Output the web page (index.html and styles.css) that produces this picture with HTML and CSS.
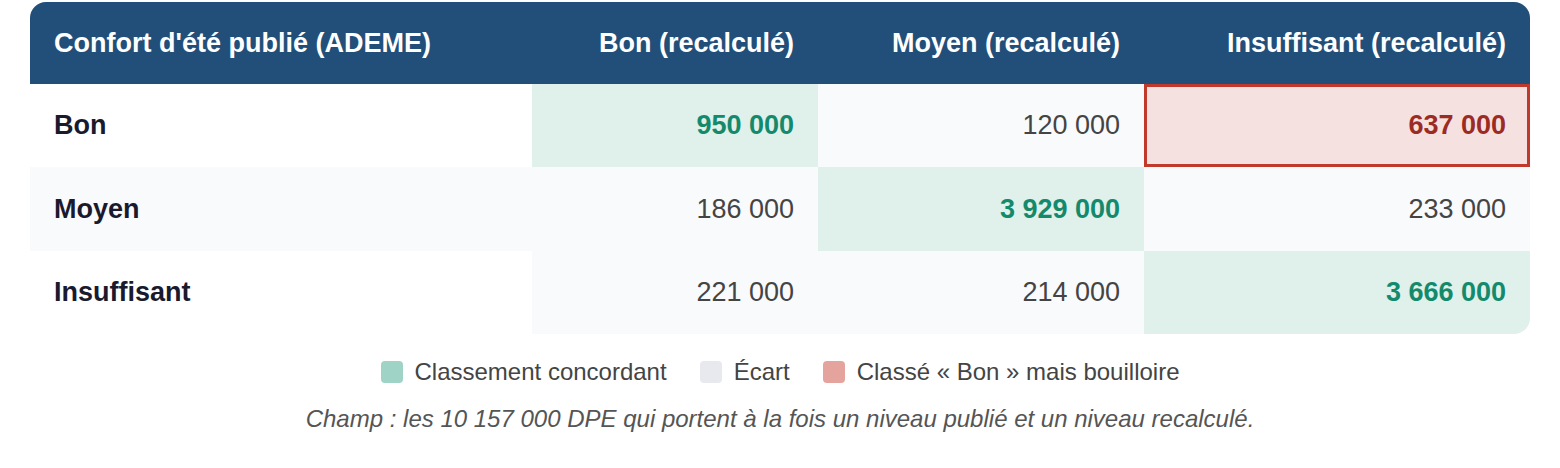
FILE: index.html
```html
<!DOCTYPE html>
<html lang="fr">
<head>
<meta charset="utf-8">
<link rel="stylesheet" href="styles.css">
</head>
<body>
<div class="wrap">
  <table class="matrix">
    <thead>
      <tr>
        <th class="lead">Confort d'été publié (ADEME)</th>
        <th>Bon (recalculé)</th>
        <th>Moyen (recalculé)</th>
        <th>Insuffisant (recalculé)</th>
      </tr>
    </thead>
    <tbody>
      <tr>
        <th class="rowh">Bon</th>
        <td class="match">950 000</td>
        <td class="off">120 000</td>
        <td class="alert">637 000</td>
      </tr>
      <tr class="stripe">
        <th class="rowh">Moyen</th>
        <td class="off">186 000</td>
        <td class="match">3 929 000</td>
        <td class="off">233 000</td>
      </tr>
      <tr>
        <th class="rowh">Insuffisant</th>
        <td class="off">221 000</td>
        <td class="off">214 000</td>
        <td class="match last">3 666 000</td>
      </tr>
    </tbody>
  </table>
  <div class="legend">
    <span class="item"><span class="sw sw-match"></span>Classement concordant</span>
    <span class="item"><span class="sw sw-off"></span>Écart</span>
    <span class="item"><span class="sw sw-alert"></span>Classé « Bon » mais bouilloire</span>
  </div>
  <p class="note">Champ : les 10 157 000 DPE qui portent à la fois un niveau publié et un niveau recalculé.</p>
</div>
</body>
</html>
```
FILE: styles.css
```css
html, body {
  margin: 0;
  padding: 0;
  background: #ffffff;
  font-family: "Liberation Sans", Arial, sans-serif;
}
.wrap {
  padding: 2px 30px 0 30px;
}
.matrix {
  width: 1500px;
  border-collapse: separate;
  border-spacing: 0;
  font-size: 27px;
}
.matrix thead th {
  background: #214f7a;
  color: #ffffff;
  font-weight: bold;
  text-align: right;
  height: 82px;
  padding: 0 24px;
  box-sizing: border-box;
}
.matrix thead th.lead {
  text-align: left;
  border-top-left-radius: 16px;
  width: 502px;
}
.matrix thead th:nth-child(2) { width: 286px; }
.matrix thead th:nth-child(3) { width: 326px; }
.matrix thead th:last-child {
  border-top-right-radius: 16px;
}
.matrix tbody th.rowh {
  text-align: left;
  font-weight: bold;
  color: #1a1a2e;
  background: #ffffff;
  padding: 0 24px;
}
.matrix tbody tr.stripe th.rowh {
  background: #f9fafc;
}
.matrix td {
  text-align: right;
  padding: 0 24px;
  height: 83.4px;
  box-sizing: border-box;
  color: #444444;
}
.matrix td.off {
  background: #f9fafc;
}
.matrix td.match {
  background: #e0f0eb;
  color: #138a6c;
  font-weight: bold;
}
.matrix td.alert {
  background: #f6e1e1;
  color: #9b2c24;
  font-weight: bold;
  border: 3px solid #c0392b;
  padding-right: 21px;
}
.matrix td.last {
  border-bottom-right-radius: 16px;
}
.legend {
  display: flex;
  justify-content: center;
  align-items: center;
  gap: 33px;
  margin-top: 24px;
  font-size: 24px;
  color: #444444;
}
.item {
  display: inline-flex;
  align-items: center;
  gap: 12px;
}
.sw {
  display: inline-block;
  width: 22px;
  height: 22px;
  border-radius: 4px;
}
.sw-match { background: #9fd3c6; }
.sw-off { background: #e8e9ee; }
.sw-alert { background: #e4a39c; }
.note {
  margin: 19px 0 0 0;
  text-align: center;
  font-style: italic;
  font-size: 24px;
  color: #555555;
}
```
